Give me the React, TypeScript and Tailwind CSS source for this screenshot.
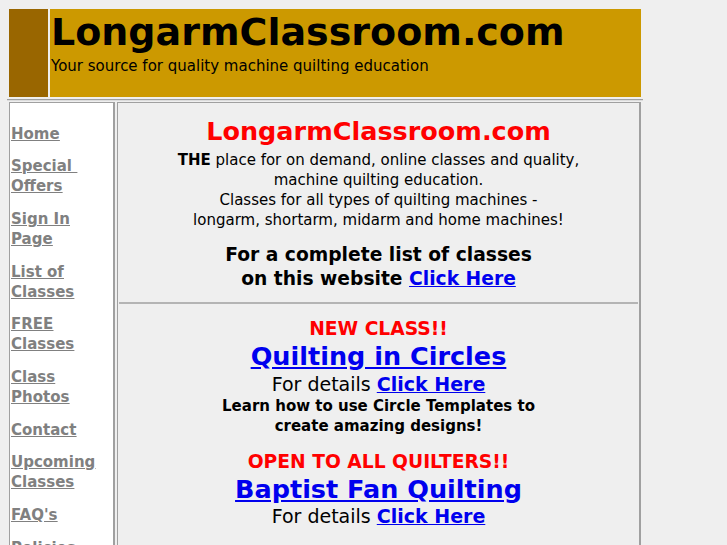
import React from 'react';

const navItems: string[][] = [
  ['Home'],
  ['Special\u00a0', 'Offers'],
  ['Sign In', 'Page'],
  ['List of', 'Classes'],
  ['FREE', 'Classes'],
  ['Class', 'Photos'],
  ['Contact'],
  ['Upcoming', 'Classes'],
  ["FAQ's"],
  ['Policies'],
];

const ClickHere = () => (
  <a href="#" className="font-bold text-[#0000ee] underline">
    Click Here
  </a>
);

const App: React.FC = () => {
  return (
    <div className="min-h-screen bg-[#efefef] pt-[7px] font-['DejaVu_Sans',sans-serif] text-black">
      {/* Banner */}
      <div className="ml-[7px] flex h-[92px] w-[636px] gap-[2px] p-[2px]">
        <div className="w-[39px] shrink-0 bg-[#996600]"></div>
        <div className="flex-1 bg-[#cc9900] pl-[1px] pt-[2px]">
          <h1 className="text-[38px] font-bold leading-[42px]">LongarmClassroom.com</h1>
          <p className="mt-[4px] text-[15px] leading-[18px]">
            Your source for quality machine quilting education
          </p>
        </div>
      </div>
      <div className="ml-[7px] w-[636px] border-t border-b border-t-[#a0a0a0] border-b-[#dcdcdc]"></div>

      {/* Body */}
      <div className="ml-[7px] flex w-[636px] gap-[2px] px-[2px] pt-[1px]">
        {/* Sidebar */}
        <nav className="w-[106px] shrink-0 border border-[#a0a0a0] border-r-2 bg-white pl-[1px] pt-[20.6px]">
          {navItems.map((lines) => (
            <a
              key={lines.join('')}
              href="#"
              className="mb-[12.7px] block text-[15px] font-bold leading-[20px] text-[#808080] underline"
            >
              {lines.map((l, i) => (
                <span key={i} className="block w-fit underline">
                  {l}
                </span>
              ))}
            </a>
          ))}
        </nav>

        {/* Main content */}
        <main className="flex-1 border border-[#a0a0a0] border-r-2 text-center">
          <section className="px-2 pb-[11px] pt-[14px]">
            <h2 className="text-[25.5px] font-bold leading-[28px] text-[#ff0000]">LongarmClassroom.com</h2>
            <p className="mt-[5px] text-[15px] leading-[20px]">
              <b>THE</b> place for on demand, online classes and quality,
              <br />
              machine quilting education.
              <br />
              Classes for all types of quilting machines -
              <br />
              longarm, shortarm, midarm and home machines!
            </p>
            <p className="mt-[13px] text-[18.7px] font-bold leading-[24px]">
              For a complete list of classes
              <br />
              on this website <ClickHere />
            </p>
          </section>

          <div className="mx-[1px] border-t-2 border-[#b4b4b4]"></div>

          <section className="px-2 pt-[13px]">
            <p className="text-[18.7px] font-bold leading-[24px] text-[#ff0000]">NEW CLASS!!</p>
            <a href="#" className="block">
              <span className="text-[25.5px] font-bold leading-[30px] text-[#0000ee] underline">
                Quilting in Circles
              </span>
            </a>
            <p className="text-[19px] leading-[24px]">
              For details <ClickHere />
            </p>
            <p className="text-[15px] font-bold leading-[20px]">
              Learn how to use Circle Templates to
              <br />
              create amazing designs!
            </p>

            <p className="mt-[13.5px] text-[18.7px] font-bold leading-[24px] text-[#ff0000]">
              OPEN TO ALL QUILTERS!!
            </p>
            <a href="#" className="block">
              <span className="text-[25.5px] font-bold leading-[30px] text-[#0000ee] underline">
                Baptist Fan Quilting
              </span>
            </a>
            <p className="text-[19px] leading-[22px]">
              For details <ClickHere />
            </p>
          </section>
        </main>
      </div>
    </div>
  );
};

export default App;
